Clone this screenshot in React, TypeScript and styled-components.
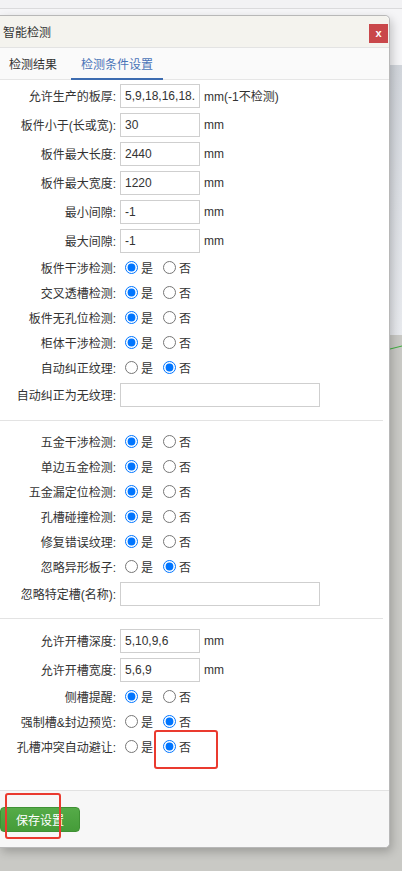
import React from 'react';
import styled, { createGlobalStyle } from 'styled-components';

const FONT = `"Liberation Sans", "Noto Sans CJK SC", sans-serif`;

const Global = createGlobalStyle`
  html, body { margin: 0; padding: 0; }
  body {
    font-family: ${FONT};
    font-size: 12px;
    color: #333;
  }
`;

const Backdrop = styled.div`
  position: relative;
  min-height: 871px;
  padding-top: 15px;
  box-sizing: border-box;
  overflow: hidden;
  background: linear-gradient(
    to bottom,
    #f2f2f4 0,
    #f2f2f4 8px,
    #dadadc 8px,
    #dadadc 9px,
    #f5f5f7 9px,
    #f5f5f7 65px,
    #d1d5db 65px,
    #e7e9ed 335px,
    #c9c9c5 335px,
    #c9c9c5 100%
  );
`;

const GreenLine = styled.svg`
  position: absolute;
  left: 386px;
  top: 336px;
`;

const Dialog = styled.div`
  position: relative;
  width: 390px;
  background: #fff;
  border: 1px solid #b8b8b8;
  border-left: none;
  border-radius: 0 5px 5px 0;
  box-shadow: 2px 4px 10px rgba(0, 0, 0, 0.22);
  box-sizing: border-box;
`;

const Header = styled.div`
  height: 31px;
  display: flex;
  align-items: center;
  justify-content: space-between;
  padding: 0 1px 0 3px;
  background: #f4f3ee;
  border-bottom: 1px solid #e3e3e3;
  border-radius: 0 5px 0 0;
`;

const Title = styled.span`
  font-size: 12px;
  color: #333;
`;

const Close = styled.button`
  width: 19px;
  height: 19px;
  margin-top: 3px;
  padding: 0;
  border: none;
  background: #c9474a;
  color: #fff;
  font-family: "Liberation Sans", sans-serif;
  font-size: 11px;
  font-weight: bold;
  line-height: 19px;
  text-align: center;
`;

const TabBar = styled.div`
  display: flex;
  gap: 4px;
  height: 31px;
  margin-left: -1px;
  background: #fafafa;
  border-bottom: 1px solid #e6e6e6;
`;

const Tab = styled.div<{ $active?: boolean }>`
  display: flex;
  align-items: center;
  padding: 0 10px;
  font-size: 12px;
  color: ${(p) => (p.$active ? '#4a74b8' : '#333')};
  border-bottom: 2px solid ${(p) => (p.$active ? '#3d6cb0' : 'transparent')};
  margin-bottom: -1px;
`;

const Section = styled.div<{ $top: number; $bottom: number }>`
  padding: ${(p) => p.$top}px 0 ${(p) => p.$bottom}px;
`;

const Divider = styled.div`
  margin-right: 6px;
  border-top: 1px solid #e3e3e3;
`;

const Row = styled.div<{ $h: number }>`
  display: grid;
  grid-template-columns: 116px 1fr;
  column-gap: 4px;
  align-items: center;
  height: ${(p) => p.$h}px;
`;

const Label = styled.span`
  text-align: right;
  white-space: nowrap;
  font-size: 12px;
  color: #333;
`;

const Control = styled.div`
  display: flex;
  align-items: center;
`;

const TextInput = styled.input<{ $w: number }>`
  width: ${(p) => p.$w}px;
  height: 24px;
  box-sizing: border-box;
  border: 1px solid #cfcfcf;
  padding: 0 4px;
  font-family: ${FONT};
  font-size: 12px;
  color: #333;
  outline: none;
  background: #fff;
`;

const Unit = styled.span`
  margin-left: 4px;
  font-size: 12px;
  color: #333;
`;

const RadioItem = styled.label`
  display: inline-flex;
  align-items: center;
  margin-right: 5px;
  font-size: 12px;
  color: #333;
`;

const Radio = styled.input`
  width: 13px;
  height: 13px;
  margin: 0 3px 0 5px;
`;

const Footer = styled.div`
  padding: 16px 0 15px;
  background: #f7f7f7;
  border-top: 1px solid #e2e2e2;
  border-radius: 0 0 5px 0;
`;

const SaveButton = styled.button`
  width: 80px;
  height: 25px;
  padding: 0;
  border: 1px solid #3f9134;
  border-radius: 4px;
  background: linear-gradient(to bottom, #55ab48, #459c39);
  color: #fff;
  font-family: ${FONT};
  font-size: 12px;
`;

const Mark = styled.div<{ $l: number; $t: number; $w: number; $h: number }>`
  position: absolute;
  left: ${(p) => p.$l}px;
  top: ${(p) => p.$t}px;
  width: ${(p) => p.$w}px;
  height: ${(p) => p.$h}px;
  border: 2px solid #ea3a2f;
  border-radius: 3px;
  box-sizing: border-box;
  pointer-events: none;
`;

type Field =
  | { kind: 'input'; label: string; value: string; unit?: string; wide?: boolean }
  | { kind: 'radio'; label: string; yes: boolean };

const section1: Field[] = [
  { kind: 'input', label: '允许生产的板厚:', value: '5,9,18,16,18.', unit: 'mm(-1不检测)' },
  { kind: 'input', label: '板件小于(长或宽):', value: '30', unit: 'mm' },
  { kind: 'input', label: '板件最大长度:', value: '2440', unit: 'mm' },
  { kind: 'input', label: '板件最大宽度:', value: '1220', unit: 'mm' },
  { kind: 'input', label: '最小间隙:', value: '-1', unit: 'mm' },
  { kind: 'input', label: '最大间隙:', value: '-1', unit: 'mm' },
  { kind: 'radio', label: '板件干涉检测:', yes: true },
  { kind: 'radio', label: '交叉透槽检测:', yes: true },
  { kind: 'radio', label: '板件无孔位检测:', yes: true },
  { kind: 'radio', label: '柜体干涉检测:', yes: true },
  { kind: 'radio', label: '自动纠正纹理:', yes: false },
  { kind: 'input', label: '自动纠正为无纹理:', value: '', wide: true },
];

const section2: Field[] = [
  { kind: 'radio', label: '五金干涉检测:', yes: true },
  { kind: 'radio', label: '单边五金检测:', yes: true },
  { kind: 'radio', label: '五金漏定位检测:', yes: true },
  { kind: 'radio', label: '孔槽碰撞检测:', yes: true },
  { kind: 'radio', label: '修复错误纹理:', yes: true },
  { kind: 'radio', label: '忽略异形板子:', yes: false },
  { kind: 'input', label: '忽略特定槽(名称):', value: '', wide: true },
];

const section3: Field[] = [
  { kind: 'input', label: '允许开槽深度:', value: '5,10,9,6', unit: 'mm' },
  { kind: 'input', label: '允许开槽宽度:', value: '5,6,9', unit: 'mm' },
  { kind: 'radio', label: '侧槽提醒:', yes: true },
  { kind: 'radio', label: '强制槽&封边预览:', yes: false },
  { kind: 'radio', label: '孔槽冲突自动避让:', yes: false },
];

function FieldRow({ f, id }: { f: Field; id: string }) {
  if (f.kind === 'input') {
    return (
      <Row $h={29}>
        <Label>{f.label}</Label>
        <Control>
          <TextInput $w={f.wide ? 200 : 80} defaultValue={f.value} />
          {f.unit && <Unit>{f.unit}</Unit>}
        </Control>
      </Row>
    );
  }
  return (
    <Row $h={25}>
      <Label>{f.label}</Label>
      <Control>
        <RadioItem>
          <Radio type="radio" name={id} defaultChecked={f.yes} />是
        </RadioItem>
        <RadioItem>
          <Radio type="radio" name={id} defaultChecked={!f.yes} />否
        </RadioItem>
      </Control>
    </Row>
  );
}

export default function App() {
  return (
    <>
      <Global />
      <Backdrop>
        <GreenLine width="20" height="16" viewBox="0 0 20 16">
          <line x1="0" y1="14" x2="20" y2="9" stroke="#3fae3f" strokeWidth="1" />
        </GreenLine>
        <Dialog>
          <Header>
            <Title>智能检测</Title>
            <Close>x</Close>
          </Header>
          <TabBar>
            <Tab>检测结果</Tab>
            <Tab $active>检测条件设置</Tab>
          </TabBar>
          <Section $top={1} $bottom={11}>
            {section1.map((f, i) => (
              <FieldRow key={i} f={f} id={`s1-${i}`} />
            ))}
          </Section>
          <Divider />
          <Section $top={8} $bottom={10}>
            {section2.map((f, i) => (
              <FieldRow key={i} f={f} id={`s2-${i}`} />
            ))}
          </Section>
          <Divider />
          <Section $top={7} $bottom={31}>
            {section3.map((f, i) => (
              <FieldRow key={i} f={f} id={`s3-${i}`} />
            ))}
          </Section>
          <Footer>
            <SaveButton>保存设置</SaveButton>
          </Footer>
          <Mark $l={154} $t={714} $w={64} $h={39} />
          <Mark $l={5} $t={777} $w={56} $h={46} />
        </Dialog>
      </Backdrop>
    </>
  );
}
